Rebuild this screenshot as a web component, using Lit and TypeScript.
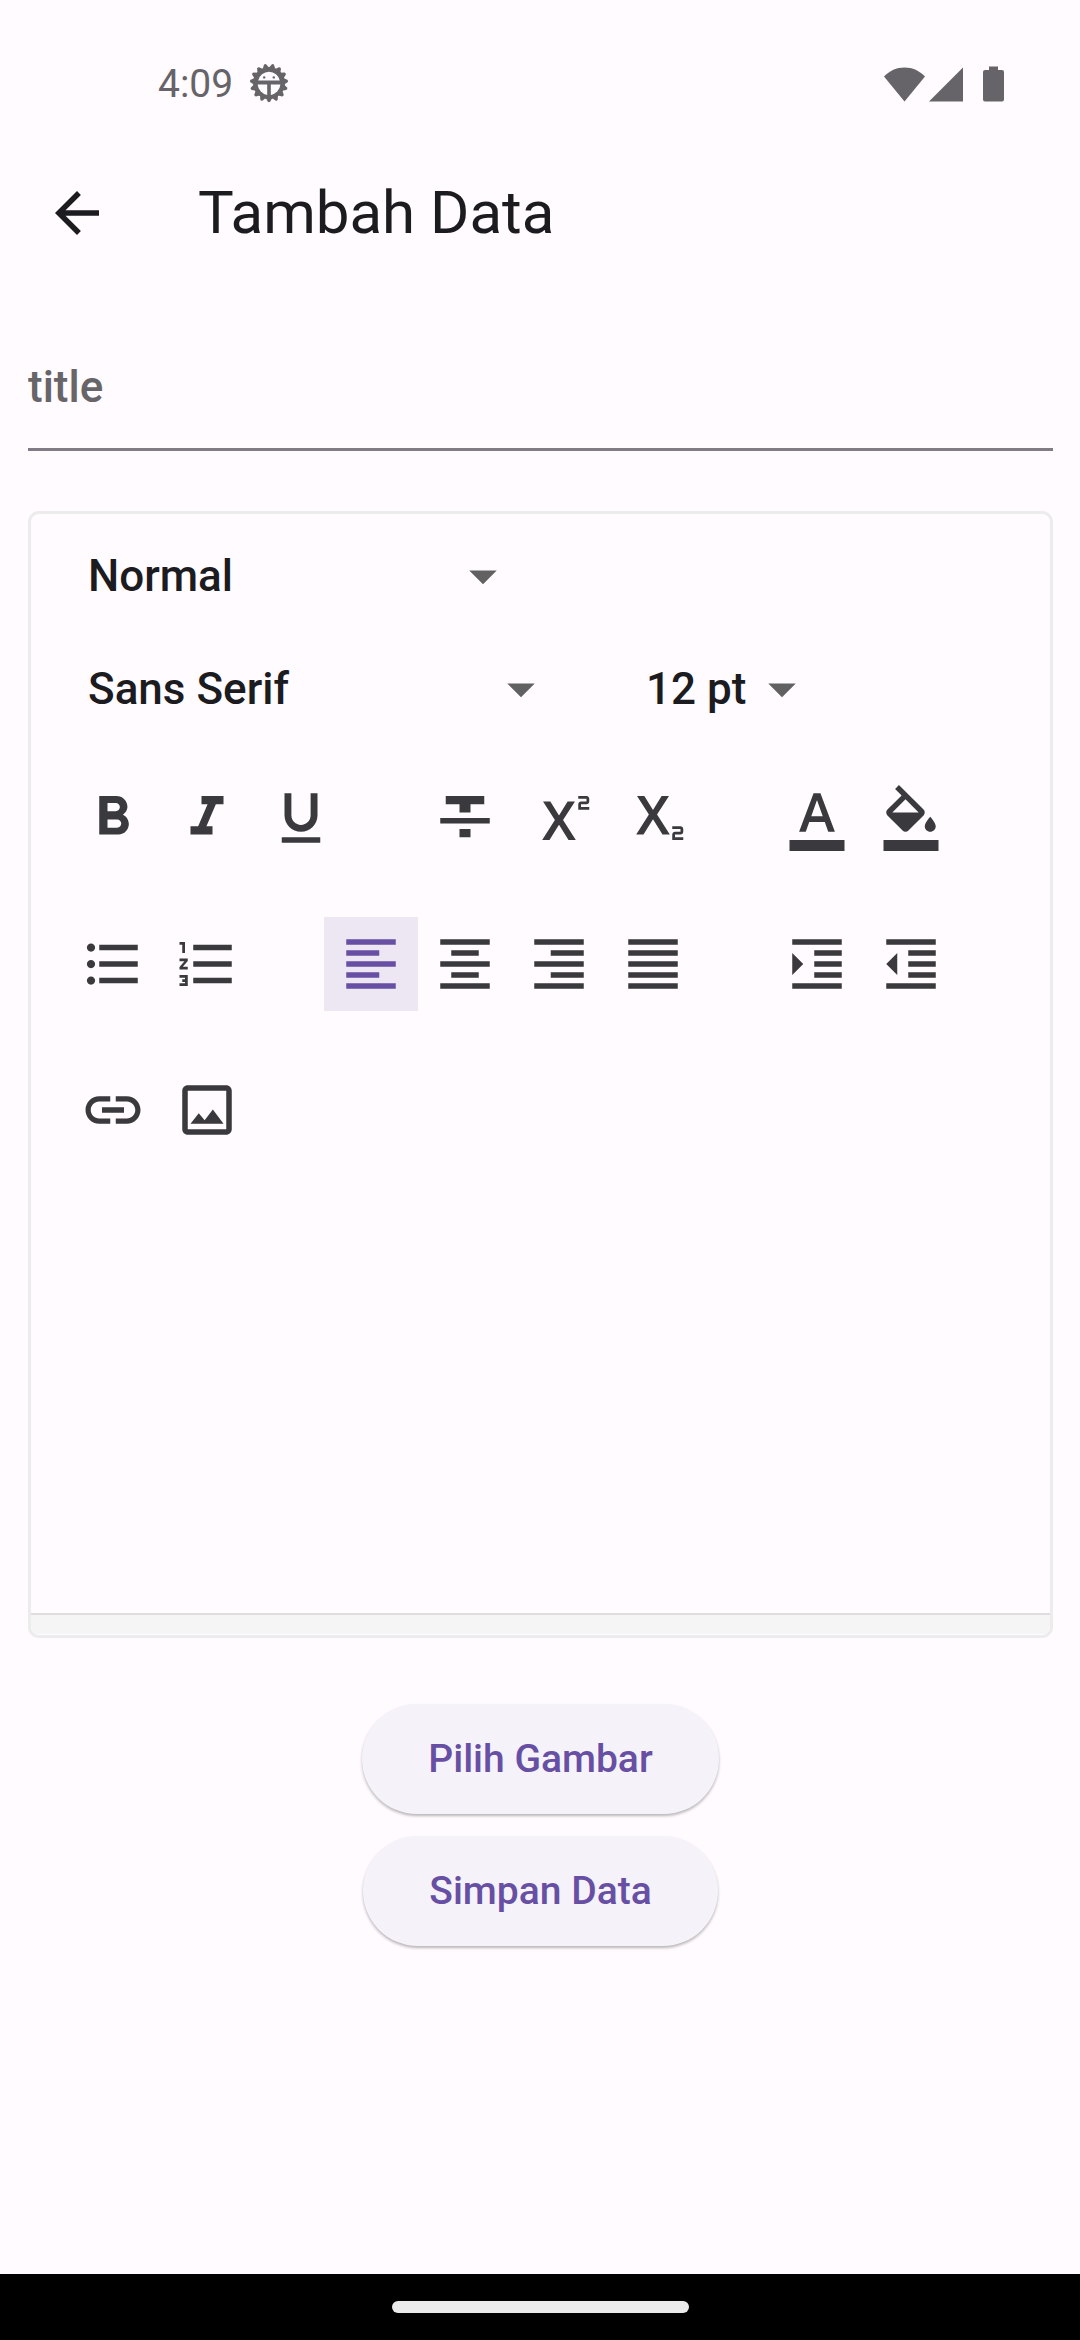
import { LitElement, html, css, svg } from "lit";
import { customElement, property, state } from "lit/decorators.js";
import { classMap } from "lit/directives/class-map.js";

const ICONS: Record<string, string> = {
  back: "M20 11H7.83l5.59-5.59L12 4l-8 8 8 8 1.41-1.41L7.83 13H20v-2z",
  dropdown: "M7 10l5 5 5-5z",
  bold: "M15.6 10.79c.97-.67 1.65-1.77 1.65-2.79 0-2.26-1.75-4-4-4H7v14h7.04c2.09 0 3.71-1.7 3.71-3.79 0-1.52-.86-2.82-2.15-3.42zM10 6.5h3c.83 0 1.5.67 1.5 1.5s-.67 1.5-1.5 1.5h-3v-3zm3.5 9H10v-3h3.5c.83 0 1.5.67 1.5 1.5s-.67 1.5-1.5 1.5z",
  italic: "M10 4v3h2.21l-3.42 8H6v3h8v-3h-2.21l3.42-8H18V4z",
  underline:
    "M12 17c3.31 0 6-2.69 6-6V3h-2.5v8c0 1.93-1.57 3.5-3.5 3.5S8.5 12.93 8.5 11V3H6v8c0 3.31 2.69 6 6 6zm-7 2v2h14v-2H5z",
  strikethrough: "M10 19h4v-3h-4v3zM5 4v3h5v3h4V7h5V4H5zM3 14h18v-2H3v2z",
  superscript:
    "M22 7h-2v1h3v1h-4V7c0-.55.45-1 1-1h2V5h-3V4h3c.55 0 1 .45 1 1v1c0 .55-.45 1-1 1zM5.88 20h2.66l3.4-5.42h.12l3.4 5.42h2.66l-4.65-7.27L17.81 6h-2.68l-3.07 4.99h-.12L8.85 6H6.19l4.32 6.73L5.88 20z",
  subscript:
    "M22 18h-2v1h3v1h-4v-2c0-.55.45-1 1-1h2v-1h-3v-1h3c.55 0 1 .45 1 1v1c0 .55-.45 1-1 1zM5.88 18h2.66l3.4-5.42h.12l3.4 5.42h2.66l-4.65-7.27L17.81 4h-2.68l-3.07 4.99h-.12L8.85 4H6.19l4.32 6.73L5.88 18z",
  color:
    "M2 20h20v4H2v-4zM5.49 17h2.42l1.27-3.58h5.65L16.09 17h2.42L13.25 3h-2.5L5.49 17zM9.91 11.39l2.03-5.79h.12l2.03 5.79H9.91z",
  fill: "M16.56 8.94L7.62 0 6.21 1.41l2.38 2.38-5.15 5.15c-.59.59-.59 1.54 0 2.12l5.5 5.5c.29.29.68.44 1.06.44s.77-.15 1.06-.44l5.5-5.5c.59-.58.59-1.53 0-2.12zM5.21 10L10 5.21 14.79 10H5.21zM19 11.5s-2 2.17-2 3.5c0 1.1.9 2 2 2s2-.9 2-2c0-1.33-2-3.5-2-3.5zM2 20h20v4H2v-4z",
  bulleted:
    "M4 10.5c-.83 0-1.5.67-1.5 1.5s.67 1.5 1.5 1.5 1.5-.67 1.5-1.5-.67-1.5-1.5-1.5zm0-6c-.83 0-1.5.67-1.5 1.5S3.17 7.5 4 7.5 5.5 6.83 5.5 6 4.83 4.5 4 4.5zm0 12c-.83 0-1.5.68-1.5 1.5s.68 1.5 1.5 1.5 1.5-.68 1.5-1.5-.67-1.5-1.5-1.5zM7 19h14v-2H7v2zm0-6h14v-2H7v2zm0-8v2h14V5H7z",
  numbered:
    "M2 17h2v.5H3v1h1v.5H2v1h3v-4H2v1zm1-9h1V4H2v1h1v3zm-1 3h1.8L2 13.1v.9h3v-1H3.2L5 10.9V10H2v1zm5-6v2h14V5H7zm0 14h14v-2H7v2zm0-6h14v-2H7v2z",
  left: "M15 15H3v2h12v-2zm0-8H3v2h12V7zM3 13h18v-2H3v2zm0 8h18v-2H3v2zM3 3v2h18V3H3z",
  center: "M7 15v2h10v-2H7zm-4 6h18v-2H3v2zm0-8h18v-2H3v2zm4-6v2h10V7H7zM3 3v2h18V3H3z",
  right: "M3 21h18v-2H3v2zm6-4h12v-2H9v2zm-6-4h18v-2H3v2zm6-4h12V7H9v2zM3 3v2h18V3H3z",
  justify: "M3 21h18v-2H3v2zm0-4h18v-2H3v2zm0-4h18v-2H3v2zm0-4h18V7H3v2zm0-6v2h18V3H3z",
  indent:
    "M3 21h18v-2H3v2zM3 8v8l4-4-4-4zm8 9h10v-2H11v2zM3 3v2h18V3H3zm8 6h10V7H11v2zm0 4h10v-2H11v2z",
  outdent:
    "M11 17h10v-2H11v2zm-8-5l4 4V8l-4 4zm0 9h18v-2H3v2zM3 3v2h18V3H3zm8 6h10V7H11v2zm0 4h10v-2H11v2z",
  link: "M3.9 12c0-1.71 1.39-3.1 3.1-3.1h4V7H7c-2.76 0-5 2.24-5 5s2.24 5 5 5h4v-1.9H7c-1.71 0-3.1-1.39-3.1-3.1zM8 13h8v-2H8v2zm9-6h-4v1.9h4c1.71 0 3.1 1.39 3.1 3.1s-1.39 3.1-3.1 3.1h-4V17h4c2.76 0 5-2.24 5-5s-2.24-5-5-5z",
  image:
    "M19 5v14H5V5h14m0-2H5c-1.1 0-2 .9-2 2v14c0 1.1.9 2 2 2h14c1.1 0 2-.9 2-2V5c0-1.1-.9-2-2-2zm-4.86 8.86l-3 3.87L9 13.14 6 17h12l-3.86-5.14z",
};

@customElement("md-icon")
class MdIcon extends LitElement {
  @property() name = "";

  static styles = css`
    :host {
      display: block;
      width: 66px;
      height: 66px;
    }
    .glyph {
      display: block;
      width: 100%;
      height: 100%;
      fill: currentColor;
    }
  `;

  render() {
    return html`<svg class="glyph" viewBox="0 0 24 24" aria-hidden="true">
      <path d=${ICONS[this.name] ?? ""}></path>
    </svg>`;
  }
}

@customElement("status-bar")
class StatusBar extends LitElement {
  static styles = css`
    :host {
      display: flex;
      align-items: center;
      justify-content: space-between;
      height: 136px;
      padding: 32px 76px 0 158px;
      box-sizing: border-box;
      color: #666468;
    }
    .side {
      display: flex;
      align-items: center;
    }
    .clock {
      font-size: 39px;
      line-height: 46px;
      margin-right: 16px;
    }
    .wifi {
      margin-right: 4px;
    }
    .signal {
      margin-right: 20px;
    }
    svg {
      display: block;
      fill: currentColor;
    }
    .cutout {
      fill: #fffbff;
    }
  `;

  render() {
    const teeth = Array.from({ length: 15 }, (_, i) => i * 24);
    return html`
      <div class="side">
        <time class="clock">4:09</time>
        <svg width="40" height="40" viewBox="-20 -19 40 40" aria-hidden="true">
          ${teeth.map(
            (a) =>
              svg`<path d="M-3.4 14.5L-1.3 18.6Q0 20 1.3 18.6L3.4 14.5z" transform="rotate(${a})"></path>`,
          )}
          <circle r="16"></circle>
          <path class="cutout" d="M-10.8 -2.4A11 11 0 0 1 10.8 -2.4z"></path>
          <path class="cutout" d="M-11.4 1.4H-1.8V12A12 12 0 0 1 -11.4 1.4z"></path>
          <path class="cutout" d="M11.4 1.4H1.8V12A12 12 0 0 0 11.4 1.4z"></path>
          <circle cx="-4.8" cy="-5.6" r="1.2"></circle>
          <circle cx="4.8" cy="-5.6" r="1.2"></circle>
        </svg>
      </div>
      <div class="side">
        <svg class="wifi" width="41" height="35" viewBox="0 0 41 35" aria-hidden="true">
          <path d="M20.5 34.5L0 9.5C5.5 3.8 12.5 .5 20.5 .5S35.5 3.8 41 9.5z"></path>
        </svg>
        <svg class="signal" width="34" height="35" viewBox="0 0 34 35" aria-hidden="true">
          <path d="M0 34.5L34 .5V34.5z"></path>
        </svg>
        <svg width="21" height="36" viewBox="0 0 21 36" aria-hidden="true">
          <path d="M6 .5h9V4h4a2 2 0 0 1 2 2v27.5a2 2 0 0 1-2 2H2a2 2 0 0 1-2-2V6a2 2 0 0 1 2-2h4z"></path>
        </svg>
      </div>
    `;
  }
}

interface Tool {
  icon: string;
  label: string;
}

const STYLE_TOOLS: Tool[] = [
  { icon: "bold", label: "Bold" },
  { icon: "italic", label: "Italic" },
  { icon: "underline", label: "Underline" },
];
const SCRIPT_TOOLS: Tool[] = [
  { icon: "strikethrough", label: "Strikethrough" },
  { icon: "superscript", label: "Superscript" },
  { icon: "subscript", label: "Subscript" },
];
const COLOR_TOOLS: Tool[] = [
  { icon: "color", label: "Text color" },
  { icon: "fill", label: "Highlight color" },
];
const LIST_TOOLS: Tool[] = [
  { icon: "bulleted", label: "Bulleted list" },
  { icon: "numbered", label: "Numbered list" },
];
const ALIGN_TOOLS: Tool[] = [
  { icon: "left", label: "Align left" },
  { icon: "center", label: "Align center" },
  { icon: "right", label: "Align right" },
  { icon: "justify", label: "Justify" },
];
const INDENT_TOOLS: Tool[] = [
  { icon: "indent", label: "Increase indent" },
  { icon: "outdent", label: "Decrease indent" },
];
const INSERT_TOOLS: Tool[] = [
  { icon: "link", label: "Insert link" },
  { icon: "image", label: "Insert image" },
];

@customElement("rich-editor")
class RichEditor extends LitElement {
  @state() private align = "left";

  static styles = css`
    :host {
      display: flex;
      flex-direction: column;
      border: 3px solid #ececec;
      border-radius: 11px;
      padding-bottom: 1px;
      overflow: hidden;
    }
    .toolbar {
      display: flex;
      flex-wrap: wrap;
      column-gap: 70px;
      padding: 5px 20px 0 35px;
    }
    .picker {
      display: grid;
      align-items: center;
      height: 113px;
    }
    .picker > * {
      grid-area: 1 / 1;
    }
    .style {
      width: 450px;
    }
    .family {
      width: 488px;
    }
    .size {
      width: 191px;
    }
    select {
      appearance: none;
      width: 100%;
      height: 100%;
      margin: 0;
      padding: 0 66px 0 22px;
      border: 0;
      background: none;
      color: #1c1b1f;
      font: 500 44px Roboto, sans-serif;
    }
    .arrow {
      justify-self: end;
      color: #616161;
      pointer-events: none;
    }
    .group {
      display: flex;
      align-items: center;
      height: 146px;
    }
    .tool {
      display: grid;
      place-items: center;
      width: 94px;
      height: 94px;
      margin: 0;
      padding: 0;
      border: 0;
      background: none;
      color: #3a393d;
    }
    .tool.active {
      background: #ece7f3;
      color: #6750a4;
    }
    .content {
      display: block;
      min-height: 430px;
      padding: 22px;
      box-sizing: border-box;
      border: 0;
      outline: 0;
      resize: none;
      background: none;
      color: #1c1b1f;
      font: 400 44px Roboto, sans-serif;
    }
    .grip {
      height: 19px;
      border-top: 2px solid #dedede;
      background: #f4f5f4;
    }
  `;

  private picker(kind: string, label: string, value: string) {
    return html`<div class="picker ${kind}">
      <select aria-label=${label}>
        <option>${value}</option>
      </select>
      <md-icon class="arrow" name="dropdown"></md-icon>
    </div>`;
  }

  private group(tools: Tool[], choice = false) {
    return html`<div class="group" role="group">
      ${tools.map(
        (t) => html`<button
          type="button"
          class=${classMap({ tool: true, active: choice && t.icon === this.align })}
          aria-label=${t.label}
          @click=${() => {
            if (choice) this.align = t.icon;
          }}
        >
          <md-icon name=${t.icon}></md-icon>
        </button>`,
      )}
    </div>`;
  }

  render() {
    return html`
      <div class="toolbar" role="toolbar">
        ${this.picker("style", "Paragraph style", "Normal")}
        ${this.picker("family", "Font", "Sans Serif")}
        ${this.picker("size", "Font size", "12 pt")}
        ${this.group(STYLE_TOOLS)} ${this.group(SCRIPT_TOOLS)} ${this.group(COLOR_TOOLS)}
        ${this.group(LIST_TOOLS)} ${this.group(ALIGN_TOOLS, true)}
        ${this.group(INDENT_TOOLS)} ${this.group(INSERT_TOOLS)}
      </div>
      <textarea class="content" aria-label="Content"></textarea>
      <div class="grip"></div>
    `;
  }
}

@customElement("app-root")
class AppRoot extends LitElement {
  static styles = css`
    :host {
      display: flex;
      flex-direction: column;
      min-height: 100vh;
      background: #fffbff;
      color: #1c1b1f;
      font-family: Roboto, sans-serif;
    }
    .app-bar {
      display: flex;
      align-items: center;
      gap: 88px;
      height: 154px;
      padding: 0 44px;
    }
    .back {
      padding: 0;
      border: 0;
      background: none;
      color: inherit;
    }
    .heading {
      margin: 0;
      font-size: 60px;
      line-height: 70px;
      font-weight: 400;
    }
    .form {
      display: flex;
      flex-direction: column;
      flex: 1;
      padding: 36px 27px 36px 28px;
    }
    .title {
      height: 125px;
      margin: 0 0 60px;
      padding: 0;
      box-sizing: border-box;
      border: 0;
      border-bottom: 3px solid #807b84;
      border-radius: 0;
      outline: 0;
      background: none;
      color: #1c1b1f;
      font: 500 44px Roboto, sans-serif;
    }
    .title::placeholder {
      color: #676568;
      opacity: 1;
    }
    .actions {
      display: flex;
      flex-direction: column;
      align-items: center;
      gap: 22px;
      margin-top: 66px;
    }
    .action {
      height: 110px;
      padding: 0 66px;
      border: 0;
      border-radius: 55px;
      background: #f6f2f9;
      box-shadow: 0 2px 3px rgba(0, 0, 0, 0.28);
      color: #6750a4;
      font: 500 39px Roboto, sans-serif;
    }
    .nav {
      display: grid;
      place-items: center;
      height: 66px;
      background: #000;
    }
    .pill {
      width: 297px;
      height: 12px;
      border-radius: 6px;
      background: #ebebeb;
    }
  `;

  render() {
    return html`
      <status-bar></status-bar>
      <header class="app-bar">
        <button class="back" type="button" aria-label="Back">
          <md-icon name="back"></md-icon>
        </button>
        <h1 class="heading">Tambah Data</h1>
      </header>
      <form class="form" @submit=${(e: Event) => e.preventDefault()}>
        <input class="title" type="text" placeholder="title" aria-label="title" />
        <rich-editor></rich-editor>
        <div class="actions">
          <button class="action" type="button">Pilih Gambar</button>
          <button class="action" type="submit">Simpan Data</button>
        </div>
      </form>
      <footer class="nav"><div class="pill"></div></footer>
    `;
  }
}
